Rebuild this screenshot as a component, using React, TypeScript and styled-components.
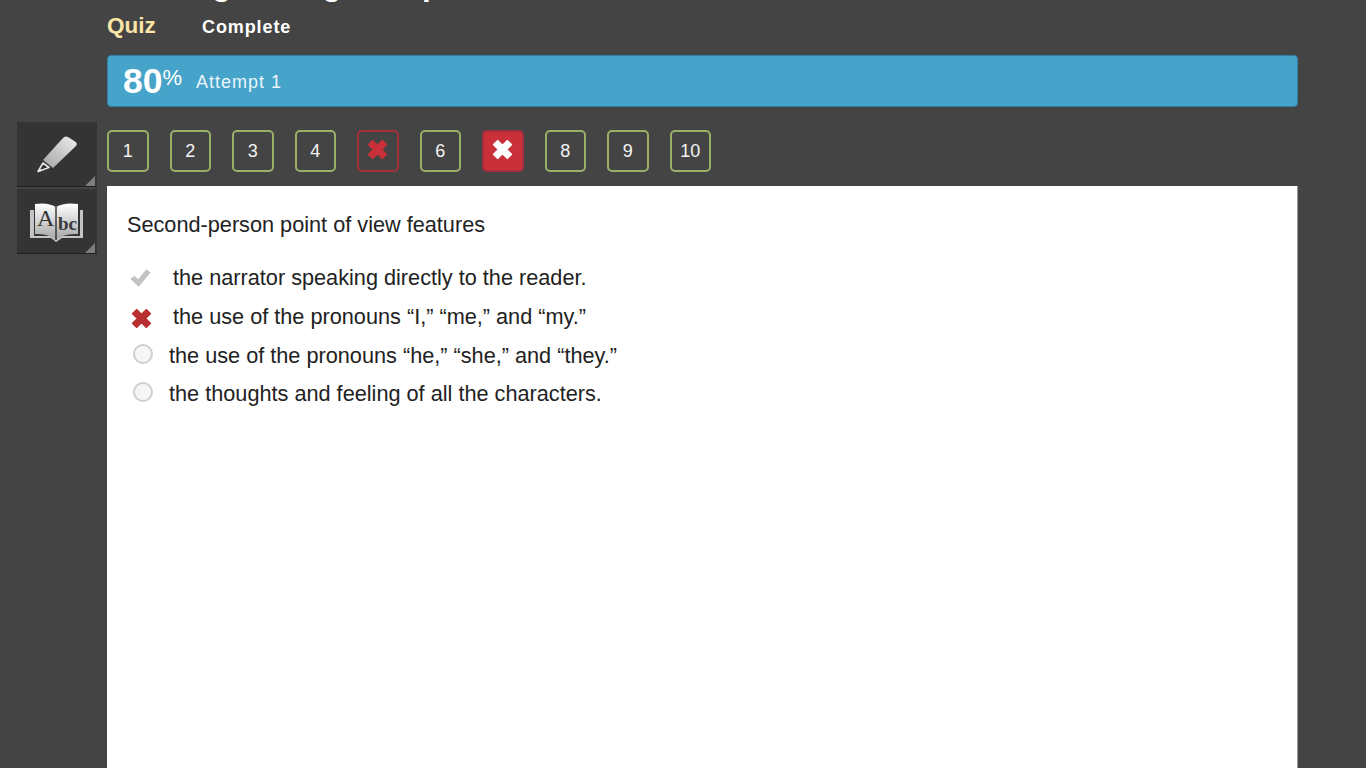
import React from "react";
import styled, { createGlobalStyle } from "styled-components";

const GlobalStyle = createGlobalStyle`
  html, body {
    margin: 0;
    height: 768px;
    overflow: hidden;
    background: #444444;
    font-family: "Liberation Sans", Arial, sans-serif;
  }
`;

const Page = styled.div`
  display: flex;
  height: 768px;
  overflow: hidden;
  padding-left: 17px;
  box-sizing: border-box;
`;

const Tools = styled.div`
  width: 80px;
  margin-top: 122px;
  margin-right: 10px;
  display: flex;
  flex-direction: column;
  gap: 2px;
  flex-shrink: 0;
`;

const ToolButton = styled.div`
  position: relative;
  width: 80px;
  height: 65px;
  box-sizing: border-box;
  background: #343434;
  border-bottom: 1px solid #1f1f1f;
  display: flex;
  align-items: center;
  justify-content: center;

  &::after {
    content: "";
    position: absolute;
    right: 2px;
    bottom: 0;
    border-style: solid;
    border-width: 0 0 10px 10px;
    border-color: transparent transparent #7d7d7d transparent;
  }
`;

const Main = styled.div`
  width: 1191px;
  flex-shrink: 0;
  display: flex;
  flex-direction: column;
`;

// the page scrolled past this heading, only its descenders still show
const Heading = styled.h1`
  margin: -32px 0 0;
  height: 32px;
  line-height: 32px;
  font-size: 31.5px;
  font-weight: 700;
  color: #fff;
  white-space: nowrap;
`;

const TitleRow = styled.div`
  height: 55px;
  box-sizing: border-box;
  padding-top: 13px;
  display: flex;
  align-items: baseline;
`;

const QuizLabel = styled.span`
  color: #fce5a8;
  font-size: 22.5px;
  font-weight: 700;
  width: 95px;
`;

const Status = styled.span`
  color: #fff;
  font-size: 18px;
  font-weight: 700;
  letter-spacing: 0.9px;
`;

const ScoreBar = styled.div`
  height: 52px;
  box-sizing: border-box;
  background: #46a3c9;
  border: 1px solid #2f7fa3;
  border-radius: 4px;
  padding-left: 15px;
  display: flex;
  align-items: center;
  color: #fff;
`;

const Score = styled.span`
  font-size: 35.5px;
  font-weight: 700;
`;

const Percent = styled.span`
  font-size: 22px;
  align-self: flex-start;
  margin-top: 9px;
`;

const Attempt = styled.span`
  font-size: 18px;
  margin-left: 14px;
  margin-top: 2px;
  letter-spacing: 1px;
  color: #eaf6fb;
`;

const Pager = styled.div`
  display: flex;
  gap: 21px;
  height: 79px;
  padding-top: 23px;
  box-sizing: border-box;
`;

const PageBox = styled.div<{ $state?: "wrong" | "current" }>`
  width: 41.5px;
  height: 41.5px;
  box-sizing: border-box;
  border-radius: 5px;
  border: 2px solid ${(p) => (p.$state ? "#a5303b" : "#98b068")};
  background: ${(p) => (p.$state === "current" ? "#c9303a" : "transparent")};
  color: #f4f4f4;
  font-size: 18px;
  display: flex;
  align-items: center;
  justify-content: center;
  padding-top: ${(p) => (p.$state ? 0 : 1)}px;
  padding-bottom: ${(p) => (p.$state ? 2 : 0)}px;
`;

const Card = styled.div`
  flex: 1;
  background: #fff;
  border-right: 1px solid #999;
  padding: 26px 20px;
  color: #222;
  font-size: 21.7px;
`;

const Question = styled.div`
  height: 26px;
  line-height: 26px;
  margin-bottom: 21px;
`;

const Option = styled.div`
  display: flex;
  align-items: center;
  height: 38.7px;
`;

const MarkSlot = styled.div<{ $wide?: boolean }>`
  width: ${(p) => (p.$wide ? 46 : 42)}px;
  flex-shrink: 0;
  display: flex;
  align-items: center;
  padding-left: ${(p) => (p.$wide ? 4 : 3)}px;
  box-sizing: border-box;
`;

const Radio = styled.div`
  width: 20px;
  height: 20px;
  box-sizing: border-box;
  margin: -4px 0 0 3px;
  border-radius: 50%;
  border: 2px solid #cfcfcf;
  background: #f6f6f6;
`;

const WrongMark = styled.span`
  display: flex;
  margin-top: 2px;
`;

const Cross = ({ size, color }: { size: number; color: string }) => (
  <svg width={size} height={size} viewBox="0 0 24 24">
    <path
      d="M2 6.5 6.5 2 12 7.5 17.5 2 22 6.5 16.5 12 22 17.5 17.5 22 12 16.5 6.5 22 2 17.5 7.5 12Z"
      fill={color}
      stroke={color}
      strokeWidth="2"
      strokeLinejoin="round"
    />
  </svg>
);

const Check = () => (
  <svg width="22" height="22" viewBox="0 0 24 24" style={{ marginLeft: -2 }}>
    <path d="M2 13 6 10 10 14 19 3 23 6 10.5 21Z" fill="#c2c2c2" stroke="#c2c2c2" strokeLinejoin="round" />
  </svg>
);

const Pencil = () => (
  <svg width="44" height="42" viewBox="0 0 44 42">
    <defs>
      <linearGradient id="pen" x1="1" y1="0" x2="0" y2="1">
        <stop offset="0" stopColor="#ededed" />
        <stop offset="1" stopColor="#a4a4a4" />
      </linearGradient>
    </defs>
    <path d="M8 27 28 5Q30 2.5 33 4L40 8.5Q43 10.5 41 13L18 35Z" fill="url(#pen)" />
    <path d="M8 30 14 34.5 3 38.5Z" fill="#2b2b2b" stroke="#e4e4e4" strokeWidth="1.6" strokeLinejoin="round" />
    <path d="M3 38.5 6 36 7 38Z" fill="#eee" />
  </svg>
);

const Book = () => (
  <svg width="58" height="44" viewBox="0 0 58 44">
    <defs>
      <linearGradient id="page" x1="0" y1="0" x2="0" y2="1">
        <stop offset="0" stopColor="#ffffff" />
        <stop offset="1" stopColor="#a4a4a4" />
      </linearGradient>
    </defs>
    <path d="M2 11H6V37H52V11H55V39H34L28 43L23 39H2Z" fill="#c4c4c4" />
    <path d="M7 5Q20 3 28 8Q36 3 50 5V35Q36 34 28 41Q20 34 7 35Z" fill="url(#page)" />
    <path d="M28 8V41" stroke="#3a3a3a" strokeWidth="1.5" />
    <text x="9" y="27" fontFamily="Liberation Serif" fontSize="24" fill="#333">A</text>
    <text x="30" y="31" fontFamily="Liberation Serif" fontSize="19" fontWeight="700" fill="#3a3a3a">bc</text>
  </svg>
);

const pages = [1, 2, 3, 4, 5, 6, 7, 8, 9, 10];

const options = [
  { text: "the narrator speaking directly to the reader.", mark: "right" },
  { text: "the use of the pronouns “I,” “me,” and “my.”", mark: "wrong" },
  { text: "the use of the pronouns “he,” “she,” and “they.”" },
  { text: "the thoughts and feeling of all the characters." },
];

const App = () => {
  return (
    <>
      <GlobalStyle />
      <Page>
        <Tools>
          <ToolButton>
            <Pencil />
          </ToolButton>
          <ToolButton>
            <Book />
          </ToolButton>
        </Tools>
        <Main>
          <Heading>Reading Strong Metaphors</Heading>
          <TitleRow>
            <QuizLabel>Quiz</QuizLabel>
            <Status>Complete</Status>
          </TitleRow>
          <ScoreBar>
            <Score>80</Score>
            <Percent>%</Percent>
            <Attempt>Attempt 1</Attempt>
          </ScoreBar>
          <Pager>
            {pages.map((n) =>
              n === 5 ? (
                <PageBox key={n} $state="wrong">
                  <Cross size={21} color="#c9303a" />
                </PageBox>
              ) : n === 7 ? (
                <PageBox key={n} $state="current">
                  <Cross size={21} color="#fff" />
                </PageBox>
              ) : (
                <PageBox key={n}>{n}</PageBox>
              )
            )}
          </Pager>
          <Card>
            <Question>Second-person point of view features</Question>
            {options.map((o) => (
              <Option key={o.text}>
                <MarkSlot $wide={!!o.mark}>
                  {o.mark === "right" && <Check />}
                  {o.mark === "wrong" && (
                    <WrongMark>
                      <Cross size={21} color="#b8302f" />
                    </WrongMark>
                  )}
                  {!o.mark && <Radio />}
                </MarkSlot>
                {o.text}
              </Option>
            ))}
          </Card>
        </Main>
      </Page>
    </>
  );
};

export default App;
